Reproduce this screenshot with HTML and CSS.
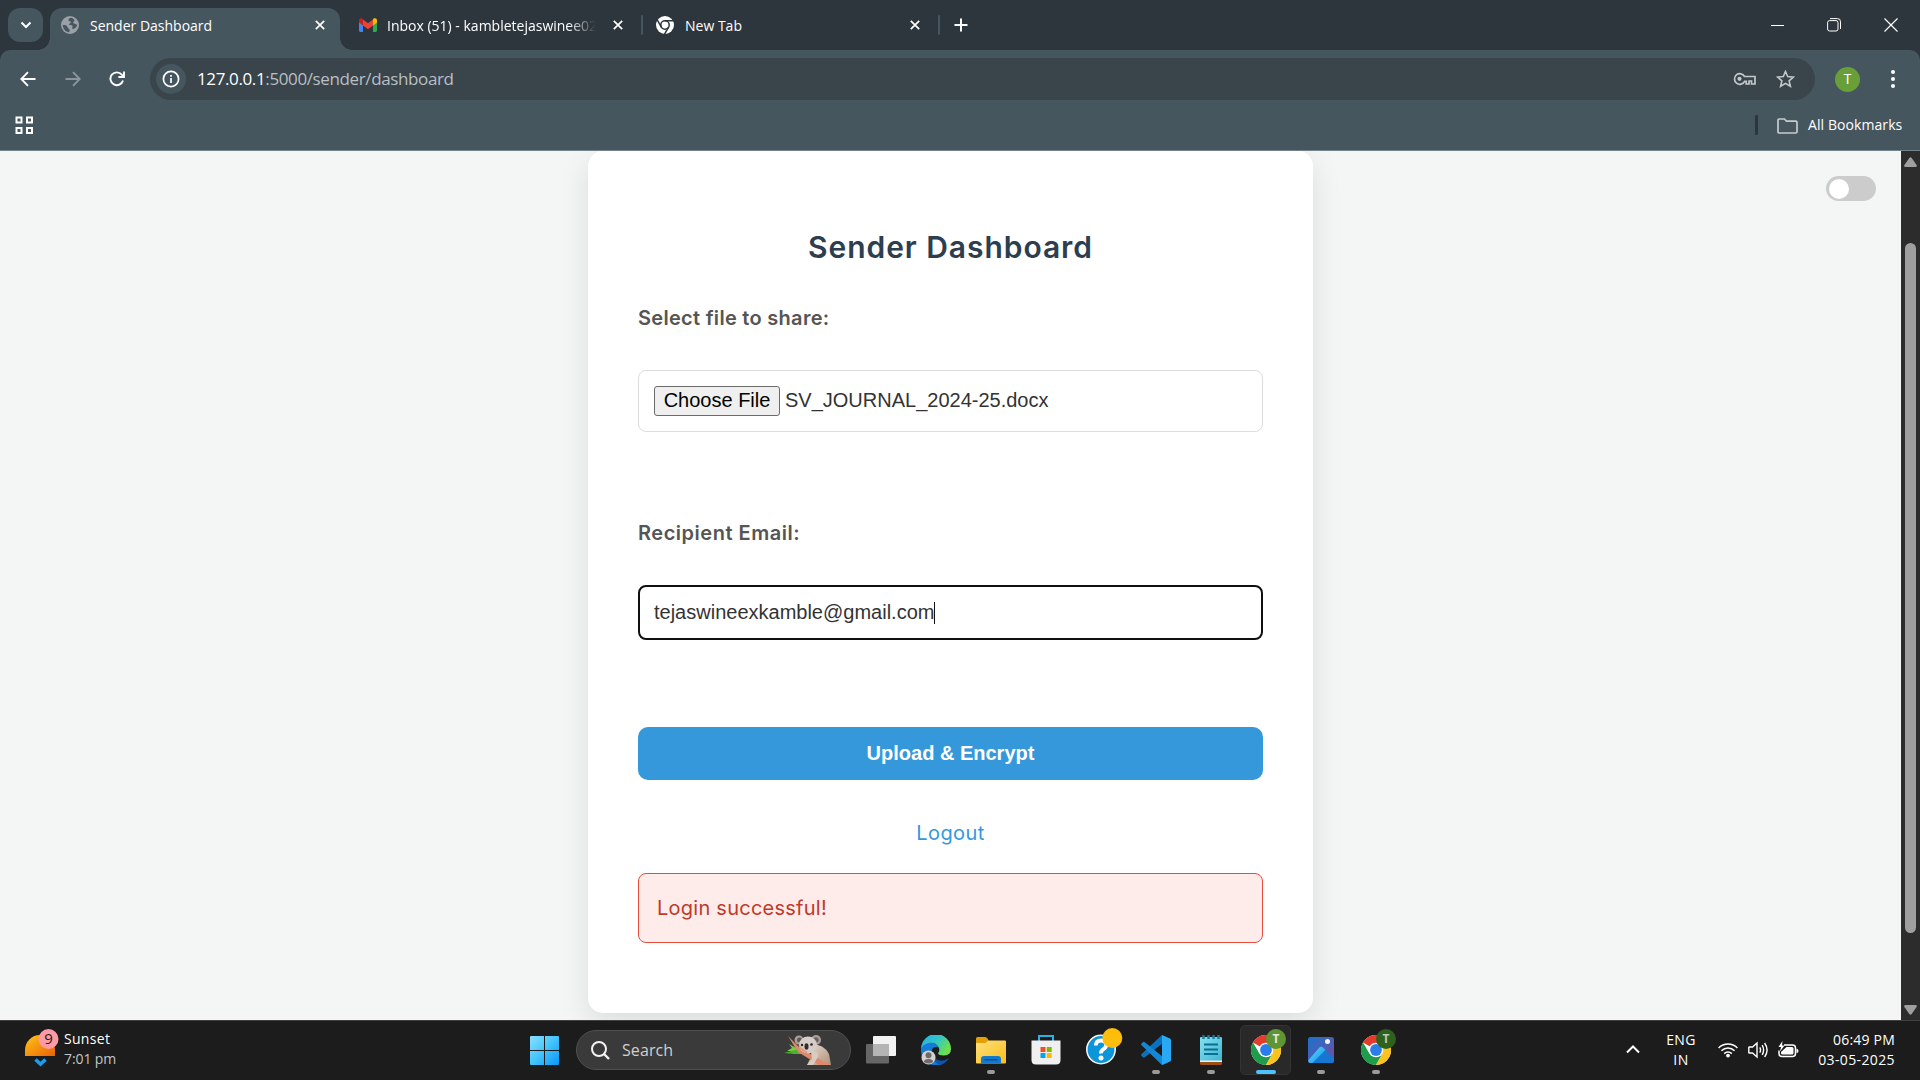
FILE: index.html
```html
<!DOCTYPE html>
<html lang="en">
<head>
<meta charset="utf-8">
<title>Sender Dashboard</title>
<link rel="stylesheet" href="styles.css">
</head>
<body>
<svg class="defs" width="0" height="0" aria-hidden="true">
  <defs>
    <linearGradient id="winTile" gradientUnits="userSpaceOnUse" x1="0" y1="0" x2="29" y2="29"><stop offset="0" stop-color="#8be0ff"/><stop offset=".5" stop-color="#43c3fb"/><stop offset="1" stop-color="#0a96f8"/></linearGradient>
    <linearGradient id="sun" x1="0" y1="0" x2="1" y2="1"><stop offset="0" stop-color="#ffc61a"/><stop offset="1" stop-color="#ea6205"/></linearGradient>
    <linearGradient id="folder" x1="0" y1="0" x2="1" y2="1"><stop offset="0" stop-color="#ffe07a"/><stop offset="1" stop-color="#fbbd1c"/></linearGradient>
    <linearGradient id="edgeTop" x1="0" y1="0" x2="1" y2=".5"><stop offset="0" stop-color="#2baee6"/><stop offset=".55" stop-color="#2fc6c9"/><stop offset="1" stop-color="#6fe04b"/></linearGradient>
    <linearGradient id="photo" x1="0" y1="0" x2="1" y2="1"><stop offset="0" stop-color="#1973cf"/><stop offset="1" stop-color="#7a4a9c"/></linearGradient>
    <linearGradient id="hill" x1="0" y1="0" x2="1" y2="1"><stop offset="0" stop-color="#5be0ff"/><stop offset="1" stop-color="#168be8"/></linearGradient>
    <linearGradient id="note" x1="0" y1="0" x2="1" y2="1"><stop offset="0" stop-color="#86e2ef"/><stop offset="1" stop-color="#40b5d3"/></linearGradient>
    <linearGradient id="koala" x1="0" y1="0" x2="1" y2="1"><stop offset="0" stop-color="#e4dcd6"/><stop offset="1" stop-color="#b28f76"/></linearGradient>
    <symbol id="chrome" viewBox="0 0 30 30">
      <circle cx="15" cy="15" r="15" fill="#fff"/>
      <path d="M15 15 2 7.500A15 15 0 0 1 28 7.500Z" fill="#e33b2e"/>
      <path d="M2 7.500A15 15 0 0 0 15 30L21.500 18.750 15 15 8.500 18.750Z" fill="#1f9d4b"/>
      <path d="M28 7.500A15 15 0 0 1 15 30L21.500 18.750 20 8Z" fill="#fcc31e"/>
      <path d="M15 7.500H28L15 11Z" fill="#e33b2e"/>
      <circle cx="15" cy="15" r="7.300" fill="#fff"/>
      <circle cx="15" cy="15" r="5.900" fill="#2b7de9"/>
    </symbol>
    <symbol id="cross" viewBox="0 0 10 10"><path d="M.8.8 9.200 9.200M9.200.8.8 9.200" stroke="#fff" stroke-width="1.700"/></symbol>
  </defs>
</svg>

<header class="browser">
  <div class="tabstrip">
    <button class="tab-search" aria-label="Search tabs"><svg width="12" height="8" viewBox="0 0 12 8"><path d="M1.500 1.500 6 6l4.500-4.500" fill="none" stroke="#fff" stroke-width="2"/></svg></button>
    <div class="tab tab-active">
      <svg class="favicon" width="18" height="18" viewBox="0 0 18 18"><circle cx="9" cy="9" r="9" fill="#9aa0a6"/><path d="M10 1.800C7 2.500 7 5 8.600 5.300s1.800 1.500.2 2.100-.7 1.700.9 1.700 2.500.9 1.700 2.100-.1 1.900 1.300 1.500c1.700-.6 3.400-2.400 3.500-4.300-1.500.5-1.700-.9-3.100-1-1.500-.2-1.200-1.600.1-2.400S12 2.200 10 1.800zM1.700 8.700c1.800.2 3.300.3 4.300 1.300.9.9.3 1.900 1.500 2.400 1.300.6 1.600 1.800.6 3.800C4.600 15.900 1.900 13 1.700 8.700z" fill="#45565f"/></svg>
      <span class="tab-title">Sender Dashboard</span>
      <svg width="10" height="10"><use href="#cross"/></svg>
    </div>
    <div class="tab tab-mail">
      <svg class="favicon" width="18" height="14" viewBox="0 0 18 14"><path d="M0 2.500V12.800C0 13.500.6 14 1.200 14H4V5.500Z" fill="#4285f4"/><path d="M18 2.500V12.800c0 .7-.6 1.200-1.200 1.200H14V5.500Z" fill="#34a853"/><path d="M4 7.500V1.500L9 5.300l5-3.800v6L9 11.200Z" fill="#ea4335"/><path d="M0 2.200v2.300l4 3V1.500L3.400.6C2 -.4 0 .3 0 2.200z" fill="#c5221f"/><path d="M18 2.200v2.300l-4 3V1.500l.6-.9C16-.4 18 .3 18 2.200z" fill="#fbbc04"/></svg>
      <span class="tab-title tab-fade">Inbox (51) - kambletejaswinee02</span>
      <svg width="10" height="10"><use href="#cross"/></svg>
    </div>
    <i class="tab-sep"></i>
    <div class="tab tab-new">
      <svg class="favicon" width="18" height="18" viewBox="0 0 18 18"><circle cx="9" cy="9" r="9" fill="#fff"/><g fill="none" stroke="#2c363c" stroke-width="1.500"><circle cx="9" cy="9" r="4.200"/><path d="M9 4.800h8.500M5.400 11.100 1.200 3.800M12.600 11.100 8.400 18.400"/></g></svg>
      <span class="tab-title">New Tab</span>
      <svg width="10" height="10"><use href="#cross"/></svg>
    </div>
    <i class="tab-sep"></i>
    <svg class="add-tab" width="14" height="14" viewBox="0 0 14 14"><path d="M7 .5v13M.5 7h13" stroke="#fff" stroke-width="2"/></svg>
    <div class="window-controls">
      <svg width="13" height="13"><path d="M0 6.500h13" stroke="#fff"/></svg>
      <svg width="14" height="14" viewBox="0 0 14 14" fill="none" stroke="#fff"><rect x=".6" y="2.600" width="10.400" height="10.400" rx="2"/><path d="M3 .6h7.500a3 3 0 0 1 3 3V11"/></svg>
      <svg width="14" height="14" viewBox="0 0 14 14"><path d="M.5.500l13 13M13.500.5l-13 13" stroke="#fff" stroke-width="1.200"/></svg>
    </div>
  </div>

  <div class="toolbar">
    <svg class="nav-icon" width="16" height="16" viewBox="0 0 16 16" fill="none" stroke="#fff" stroke-width="1.900"><path d="M15.500 8H1.500M8 1.200 1.300 8 8 14.800"/></svg>
    <svg class="nav-icon" width="16" height="16" viewBox="0 0 16 16" fill="none" stroke="#8b969c" stroke-width="1.900"><path d="M.5 8h14M8 1.200 14.700 8 8 14.800"/></svg>
    <svg class="nav-icon" width="16" height="16" viewBox="0 0 16 16" fill="none" stroke="#fff" stroke-width="1.900"><path d="M14 9.500A6.400 6.400 0 1 1 12.800 3.700L14.500 5.600M15 .6V6H9.400"/></svg>
    <div class="omnibox">
      <span class="site-info"><svg width="18" height="18" viewBox="0 0 18 18"><circle cx="9" cy="9" r="7.600" fill="none" stroke="#fff" stroke-width="1.700"/><path d="M9 8v5M9 5v1.700" stroke="#fff" stroke-width="1.700"/></svg></span>
      <span class="url"><b>127.0.0.1</b>:5000/sender/dashboard</span>
      <svg class="key" width="23" height="14" viewBox="0 0 23 14" fill="none" stroke="#c3c7ca" stroke-width="1.700"><path d="M11.500 4.500H22V12h-3.500V9H16v3h-2.800V9.300h-1.600A5.300 5.300 0 1 1 11.500 4.500Z"/><circle cx="6.500" cy="6.800" r="2.100" fill="#c3c7ca" stroke="none"/></svg>
      <svg class="star" width="19" height="18" viewBox="0 0 19 18"><path d="M9.500 1.500 11.700 6.600 17.400 7.100 13.100 10.800 14.400 16.300 9.500 13.400 4.600 16.300 5.900 10.800 1.600 7.100 7.300 6.600Z" fill="none" stroke="#c3c7ca" stroke-width="1.600"/></svg>
    </div>
    <span class="avatar">T</span>
    <svg class="dots" width="4" height="18" viewBox="0 0 4 18" fill="#fff"><circle cx="2" cy="2" r="2"/><circle cx="2" cy="9" r="2"/><circle cx="2" cy="16" r="2"/></svg>
  </div>

  <div class="bookmarks">
    <svg width="19" height="19" viewBox="0 0 19 19" fill="none" stroke="#fff" stroke-width="2"><path d="M1.500 1.500h5v5h-5zM12 1.500h5v5h-5zM1.500 12h5v5h-5zM12 12h5v5h-5z"/></svg>
    <i class="bm-sep"></i>
    <svg class="bm-folder" width="21" height="16" viewBox="0 0 21 16"><path d="M1 2.200Q1 1 2.200 1H7.500l2 2.200H18.800Q20 3.200 20 4.400V13.800Q20 15 18.800 15H2.200Q1 15 1 13.800Z" fill="none" stroke="#c7cbce" stroke-width="1.700"/></svg>
    <span class="bm-text">All Bookmarks</span>
  </div>
</header>

<div class="viewport">
  <main class="page">
    <form class="card">
      <h2>Sender Dashboard</h2>
      <label class="label-file">Select file to share:</label>
      <div class="field file"><span class="choose">Choose File</span><span class="filename">SV_JOURNAL_2024-25.docx</span></div>
      <label class="label-email">Recipient Email:</label>
      <div class="field email"><span class="email-text">tejaswineexkamble@gmail.com</span><i class="caret"></i></div>
      <button type="button" class="submit">Upload &amp; Encrypt</button>
      <a class="logout">Logout</a>
      <div class="alert"><span>Login successful!</span></div>
    </form>
    <div class="toggle"><i></i></div>
  </main>
  <div class="scrollbar">
    <svg width="13" height="10" viewBox="0 0 13 10"><path d="M5.300.9Q6.500-.5 7.700.9L12.600 8Q13.300 10 11.500 10H1.500Q-.3 10 .4 8Z" fill="#9f9f9f"/></svg>
    <i class="thumb"></i>
    <svg class="down" width="13" height="10" viewBox="0 0 13 10"><path d="M5.300 9.100Q6.500 10.500 7.700 9.100L12.600 2Q13.300 0 11.500 0H1.500Q-.3 0 .4 2Z" fill="#9f9f9f"/></svg>
  </div>
</div>

<footer class="taskbar">
  <div class="weather">
    <svg width="36" height="40" viewBox="0 0 36 40"><path d="M1 27V21A15 15 0 0 1 31 21V27Z" fill="url(#sun)"/><circle cx="24.500" cy="10" r="10" fill="#ff99a4"/><path d="m11.500 30.500 5 4.500 5-4.500" fill="none" stroke="#1c9cea" stroke-width="3.600"/><text x="24.500" y="15.300" class="badge-num">9</text></svg>
    <div class="weather-text"><span class="w1">Sunset</span><span class="w2">7:01 pm</span></div>
  </div>
  <div class="dock">
    <div class="app"><svg width="29" height="29" viewBox="0 0 29 29" fill="url(#winTile)"><path d="M1 0H14V14H0V1Q0 0 1 0zM15 0H28Q29 0 29 1V14H15zM0 15H14V29H1Q0 29 0 28zM15 15H29V28Q29 29 28 29H15z"/></svg></div>
    <div class="search">
      <svg width="19" height="19" viewBox="0 0 19 19" fill="none" stroke="#f2f2f2" stroke-width="2"><circle cx="8" cy="8" r="7"/><path d="m13 13 5 5" stroke-width="2.400"/></svg>
      <span class="search-text">Search</span>
      <svg width="48" height="32" viewBox="0 0 48 32">
        <path d="M5 10 14 15 20 20 8 20 12 17 3 17 8 14Z" fill="#7ccb43"/><path d="M0 19 15 15 22 19 12 20Z" fill="#4fae34"/>
        <path d="M27 10Q40 10 45 20L47 31H23L28 21Z" fill="url(#koala)"/>
        <path d="M4 2 15 13 30 22 46 31H35L14 18Z" fill="#dd8a6a"/>
        <circle cx="15" cy="6" r="4.500" fill="#a9a09c"/><circle cx="32" cy="6" r="5" fill="#a9a09c"/><circle cx="15.500" cy="6" r="2.500" fill="#5f5658"/><circle cx="32" cy="6" r="2.700" fill="#6d6262"/>
        <ellipse cx="24" cy="11" rx="9" ry="8.500" fill="#d6cdc8"/>
        <path d="M14 11Q18 19 25 20L22 17Z" fill="#e59a78"/>
        <ellipse cx="22.500" cy="12.500" rx="2" ry="3.200" fill="#38292d"/><circle cx="18" cy="11" r="1.200" fill="#2b2022"/><circle cx="27.500" cy="10.500" r="1.300" fill="#2b2022"/>
        <path d="M27 18Q36 17 34 23L29 31H23L28 25Z" fill="#d9cbc0"/>
      </svg>
    </div>
    <div class="app"><svg width="30" height="28" viewBox="0 0 30 28"><rect y="8" width="23" height="19.500" rx="1" fill="#666"/><rect x="7" width="23" height="20" rx="1" fill="#f2f2f2"/><rect x="7" y="8" width="16" height="12" fill="#b5b5b5"/></svg></div>
    <div class="app"><svg width="30" height="30" viewBox="0 0 30 30"><path d="M0 14A15 15 0 0 0 28 23Q21 28 15 24 9 19 12 12Z" fill="#0b57ac"/><path d="M0 14Q2 6 10 7.500 15 8 17 12 9 11 10.500 19 12 27 18 29.500A15 15 0 0 1 0 15Z" fill="#147cd6"/><path d="M0 14A15 15 0 0 1 30 14Q30 20 23 20.500 17 20.500 17 18 19 16 18 13 15 7 8 8 2 9 0 14Z" fill="url(#edgeTop)"/><circle cx="7.500" cy="22.500" r="7" fill="#d5d2d0"/><circle cx="7.500" cy="20.200" r="3" fill="#6d6a69"/><path d="M2.800 27Q3 24 7.500 24T12.200 27Q7.500 30 2.800 27Z" fill="#6d6a69"/></svg></div>
    <div class="app"><svg width="30" height="28" viewBox="0 0 30 28"><path d="M0 2.500Q0 1 1.500 1H9q1.500 0 2.500 1.500L13 5V9H0Z" fill="#e3a008"/><path d="M0 7H9.500L12.500 4.500H29Q30 4.500 30 5.500V26.500Q30 27.500 29 27.500H1Q0 27.500 0 26.500Z" fill="url(#folder)"/><path d="M5 27.500V23Q5 20 8 20H22Q25 20 25 23V27.500Z" fill="#1479ca"/><path d="M8.500 23.800h13" stroke="#0d4f93" stroke-width="1.300"/></svg><i class="run"></i></div>
    <div class="app"><svg width="30" height="30" viewBox="0 0 30 30"><path d="M8 7V1H22V7" fill="none" stroke="#29b0e8" stroke-width="2"/><path d="M.5 5.500H29.500V25Q29.500 29.500 25 29.500H5Q.5 29.500 .5 25Z" fill="#f0f0f0"/><path d="M9.500 12h5v5h-5z" fill="#f25022"/><path d="M15.700 12h5v5h-5z" fill="#7fba00"/><path d="M9.500 18h5v5h-5z" fill="#00a4ef"/><path d="M15.700 18h5v5h-5z" fill="#ffb900"/></svg></div>
    <div class="app app-help"><svg width="37" height="37" viewBox="0 0 37 37"><circle cx="15" cy="21.500" r="14.200" fill="#0b96d9" stroke="#f5f5f5" stroke-width="1.600"/><path d="M9.800 17.500Q10 12.500 15 12.500T20.200 17Q20.200 19.500 17.500 21.200T15 25.500" fill="none" stroke="#fff" stroke-width="3.800"/><circle cx="15" cy="30" r="2.500" fill="#fff"/><circle cx="26.300" cy="10" r="10" fill="#fdbd0b"/></svg></div>
    <div class="app"><svg width="30" height="30" viewBox="0 0 30 30"><path d="M22 8 3.500 22.500Q2.500 23 1.700 22L.4 20.700Q-.3 20 .6 19L21 0Z" fill="#0a72bd"/><path d="M22 22 3.500 7Q2.500 6.500 1.700 7.300L.4 8.700Q-.3 9.500.6 10.300L21 30Z" fill="#1287d6"/><path d="M21 0 29 3.500Q30 4 30 5V25Q30 26 29 26.500L21.500 30Q20.500 29.500 21 28Z" fill="#29a9f3"/></svg><i class="run"></i></div>
    <div class="app"><svg width="22" height="30" viewBox="0 0 22 30"><path d="M0 24H22V28.500Q22 30 20.500 30H1.500Q0 30 0 28.500Z" fill="#9b4e16"/><path d="M0 24H22V27H0Z" fill="#eee"/><path d="M0 3Q0 2 1 2H21Q22 2 22 3V25.500H0Z" fill="url(#note)"/><path d="M4 9.500h14M4 14.500h14M4 19h14" stroke="#0b6d91" stroke-width="1.800"/><path d="M3.500 0v4M8.500 0v4M13.500 0v4M18.500 0v4" stroke="#157c9c" stroke-width="2.400"/></svg><i class="run"></i></div>
    <div class="app app-on"><svg width="30" height="30"><use href="#chrome"/></svg><b class="profile">T</b><i class="run"></i></div>
    <div class="app"><svg width="26" height="26" viewBox="0 0 26 26"><rect width="26" height="26" rx="2.500" fill="url(#photo)"/><path d="M1 24 11 11Q13 8.500 15.500 11L26 21V23.500Q26 26 23.500 26H2.500Q1 26 1 24Z" fill="#1577d2"/><path d="M.5 23 11 11Q13 8.500 15.500 11L17.500 13 4.500 26H2.500Q0 26 .5 23Z" fill="url(#hill)"/><circle cx="19.500" cy="4.500" r="2.500" fill="#f4f4fb"/></svg><i class="run"></i></div>
    <div class="app"><svg width="30" height="30"><use href="#chrome"/></svg><b class="profile profile-dark">T</b><i class="run"></i></div>
  </div>
  <div class="tray">
    <svg width="14" height="9" viewBox="0 0 14 9"><path d="M1 7.500 7 1.500l6 6" fill="none" stroke="#fff" stroke-width="2"/></svg>
    <div class="lang"><span>ENG</span><span>IN</span></div>
    <svg class="wifi" width="20" height="16" viewBox="0 0 20 16" fill="none" stroke="#fff" stroke-width="1.500"><path d="M.6 6A13.300 13.300 0 0 1 19.400 6M3.400 8.800A9.300 9.300 0 0 1 16.600 8.800M6.200 11.600A5.400 5.400 0 0 1 13.800 11.600"/><circle cx="10" cy="13.600" r="1.900" fill="#fff" stroke="none"/></svg>
    <svg class="volume" width="21" height="18" viewBox="0 0 21 18" fill="none" stroke="#fff" stroke-width="1.400"><path d="M.8 6.500Q.8 6 1.300 6H4.500L9 2V16L4.500 12H1.300Q.8 12 .8 11.500ZM11.800 6.300Q13.300 9 11.800 11.700M14.200 4.200Q17 9 14.200 13.800M16.600 2Q21.600 9 16.600 16"/></svg>
    <svg class="battery" width="21" height="18" viewBox="0 0 21 18"><path d="M6 4H14.500Q17.500 4 17.500 7V12.500Q17.500 15.500 14.500 15.500H4Q1 15.500 1 12.500V9.500" fill="none" stroke="#fff" stroke-width="1.500"/><path d="M8.500 6H14Q15.500 6 15.500 7.500V12Q15.500 13.500 14 13.500H4.500Q3 13.500 3 12V11Z" fill="#fff"/><path d="M18.500 7.500Q20.500 8 20.500 10T18.500 12Z" fill="#fff"/><path d="M4.500 0 .5 6H3L2 10.500 6.500 4.500H4Z" fill="#fff"/></svg>
    <div class="clock"><span class="time">06:49 PM</span><span class="date">03-05-2025</span></div>
  </div>
</footer>
</body>
</html>
```
FILE: styles.css
```css
* { box-sizing: border-box; }
body { margin: 0; width: 1920px; height: 1080px; overflow: hidden; display: flex; flex-direction: column; font-family: "Open Sans", "Noto Sans", sans-serif; background: #f4f6f6; }
svg { display: block; flex: none; }
.defs { position: absolute; }
button { border: 0; padding: 0; }

/* browser chrome */
.browser { height: 151px; flex: none; background: #2c363c; }
.tabstrip { height: 50px; display: flex; align-items: center; padding-left: 8px; }
.tab-search { width: 35px; height: 34px; border-radius: 12px; background: #45565f; display: flex; align-items: center; justify-content: center; margin-right: 7px; }
.tab { display: flex; align-items: center; color: #fff; font-size: 14px; white-space: nowrap; }
.tab-active { position: relative; align-self: flex-end; width: 290px; height: 42px; background: #45565f; border-radius: 12px 12px 0 0; padding: 0 15px 8px 11px; }
.tab-active::before, .tab-active::after { content: ""; position: absolute; bottom: 0; width: 12px; height: 12px; }
.tab-active::before { left: -12px; background: radial-gradient(circle at 0 0, transparent 11.500px, #45565f 12px); }
.tab-active::after { right: -12px; background: radial-gradient(circle at 100% 0, transparent 11.500px, #45565f 12px); }
.tab-title { margin-left: 11px; flex: 1; overflow: hidden; }
.tab-mail { width: 301px; padding: 0 18px 0 19px; }
.tab-fade { margin-left: 10px; margin-right: 15px; -webkit-mask-image: linear-gradient(90deg, #000 86%, transparent 99%); mask-image: linear-gradient(90deg, #000 86%, transparent 99%); }
.tab-sep { width: 2px; height: 20px; border-radius: 1px; background: #45565f; }
.tab-new { width: 295px; padding: 0 18px 0 13px; }
.add-tab { margin-left: 14px; }
.window-controls { display: flex; align-items: center; gap: 43px; margin-left: auto; padding-right: 22px; }

.toolbar { height: 50px; background: #45565f; border-radius: 10px 10px 0 0; display: flex; align-items: center; padding: 8px 25px 0 20px; }
.nav-icon { margin-right: 28.500px; }
.omnibox { width: 1665px; height: 42px; border-radius: 21px; background: #39444b; display: flex; align-items: center; padding: 0 20px 0 6px; margin-left: -3.500px; }
.site-info { width: 30px; height: 30px; border-radius: 50%; background: #45565f; display: flex; align-items: center; justify-content: center; }
.url { margin: -1px 0 0 11px; flex: 1; font-size: 17px; color: #b9bfc3; letter-spacing: -.38px; }
.url b { font-weight: 400; color: #fff; }
.key { margin-right: 1px; }
.star { margin-left: 19px; }
.avatar { width: 25px; height: 25px; border-radius: 50%; background: #689f38; color: #fff; font-size: 14px; line-height: 24px; text-align: center; margin-left: 20px; }
.dots { margin-left: auto; }

.bookmarks { height: 51px; background: #45565f; border-bottom: 1px solid #75838c; display: flex; align-items: center; padding: 0 18px 0 15px; }
.bm-sep { width: 3px; height: 20px; border-radius: 1px; background: #2c363c; margin-left: auto; }
.bm-folder { margin: 1px 10px 0 19px; }
.bm-text { color: #fff; font-size: 14px; width: 94px; margin-top: -2px; letter-spacing: .08px; white-space: nowrap; }

/* page */
.viewport { flex: 1; min-height: 0; display: flex; }
.page { position: relative; width: 1901px; background: #f4f6f6; overflow: hidden; display: flex; justify-content: center; align-items: flex-start; font-family: Inter, sans-serif; }
.card { width: 725px; height: 862px; background: #fff; border-radius: 15px; padding: 0 50px; box-shadow: 0 10px 30px rgba(0,0,0,.1); display: flex; flex-direction: column; }
.card h2 { margin: 74px 0 0; height: 45px; line-height: 45px; text-align: center; font-size: 30px; font-weight: 600; color: #2c3e50; letter-spacing: .95px; }
.card label { height: 30px; line-height: 30px; font-size: 20px; font-weight: 600; color: #555; white-space: nowrap; }
.card .label-file { margin-top: 33px; letter-spacing: .29px; }
.card .label-email { margin-top: 86px; letter-spacing: .52px; }
.field { font: 20px "Liberation Sans", Arial, sans-serif; color: #333; background: #fff; display: flex; align-items: center; white-space: nowrap; }
.file { margin-top: 37px; height: 62px; border: 1px solid #ddd; border-radius: 8px; padding: 0 15px; }
.filename { margin-top: -2px; }
.choose { width: 126px; height: 30px; line-height: 27px; border: 1px solid #6b6b6b; border-radius: 3px; background: #efefef; color: #000; text-align: center; margin-right: 5px; }
.email { margin-top: 37px; height: 55px; border: 2px solid #101010; border-radius: 8px; padding: 0 14px; }
.caret { width: 1px; height: 22px; background: #111; }
.submit { margin-top: 87px; height: 53px; border-radius: 10px; background: #3498db; color: #fff; font: bold 20px "Liberation Sans", Arial, sans-serif; }
.logout { margin-top: 38px; height: 30px; line-height: 30px; text-align: center; font-size: 20px; color: #3498db; letter-spacing: .4px; }
.alert { margin-top: 25px; height: 70px; border: 1px solid #e74c3c; border-radius: 8px; background: #fdecea; color: #c0392b; font-size: 20px; line-height: 68px; padding-left: 18px; letter-spacing: .25px; }
.toggle { position: absolute; top: 25px; right: 25px; width: 50px; height: 25px; border-radius: 13px; background: #ccc; padding: 3px; }
.toggle i { display: block; width: 20px; height: 20px; border-radius: 50%; background: #fff; }
.scrollbar { width: 19px; background: #2c2c2c; display: flex; flex-direction: column; align-items: center; padding: 6px 0 5px; }
.thumb { width: 11px; height: 690px; border-radius: 6px; background: #9f9f9f; margin-top: 76px; }
.down { margin-top: auto; }

/* taskbar */
.taskbar { height: 60px; flex: none; background: #1c1c1c; border-top: 1px solid #414141; display: flex; align-items: center; padding-bottom: 1px; color: #fff; }
.weather { width: 517px; display: flex; padding: 0 0 3px 24px; align-items: center; }
.badge-num { font-size: 15px; text-anchor: middle; fill: #1c1c1c; }
.weather-text { display: flex; flex-direction: column; margin: 1px 0 0 4px; font-size: 14px; line-height: 20px; }
.w1 { letter-spacing: .3px; }
.w2 { color: #c4c4c4; letter-spacing: -.1px; }
.dock { display: flex; align-items: center; }
.app { position: relative; width: 55px; height: 50px; display: flex; align-items: center; justify-content: center; }
.search { width: 275px; height: 40px; margin: 0 2px 0 4px; border-radius: 20px; background: #3a3a3a; border: 1px solid #505050; display: flex; align-items: center; padding: 0 18px 0 14px; }
.search-text { margin-left: 12px; flex: 1; font-size: 16px; color: #d0d0d0; letter-spacing: .1px; }
.run { position: absolute; left: 24px; bottom: 1px; width: 8px; height: 4px; border-radius: 2px; background: #9a9a9a; }
.app-on::before { content: ""; position: absolute; inset: 0 2px; border: 1px solid #333; border-radius: 5px; background: #292929; }
.app-on svg { position: relative; }
.app-on .run { left: 18px; width: 20px; background: #4cc2ff; }
.app-help svg { margin: -7px 0 0 7px; }
.profile { position: absolute; left: 28px; top: 4px; width: 20px; height: 20px; border-radius: 50%; background: #5f9633; color: #e0ead8; font-size: 12px; line-height: 20px; text-align: center; }
.profile-dark { background: #2e611d; color: #b9c9b3; }
.tray { margin-left: auto; display: flex; align-items: center; font-size: 14px; line-height: 20px; padding: 0 25px 1px 0; }
.lang { width: 50px; margin-left: 16px; display: flex; flex-direction: column; align-items: center; letter-spacing: .4px; }
.wifi { margin-left: 12px; }
.volume { margin-left: 10px; }
.battery { margin-left: 9px; }
.clock { width: 96px; display: flex; flex-direction: column; align-items: flex-end; white-space: nowrap; }
.time { letter-spacing: .2px; }
.date { letter-spacing: .38px; }
```
